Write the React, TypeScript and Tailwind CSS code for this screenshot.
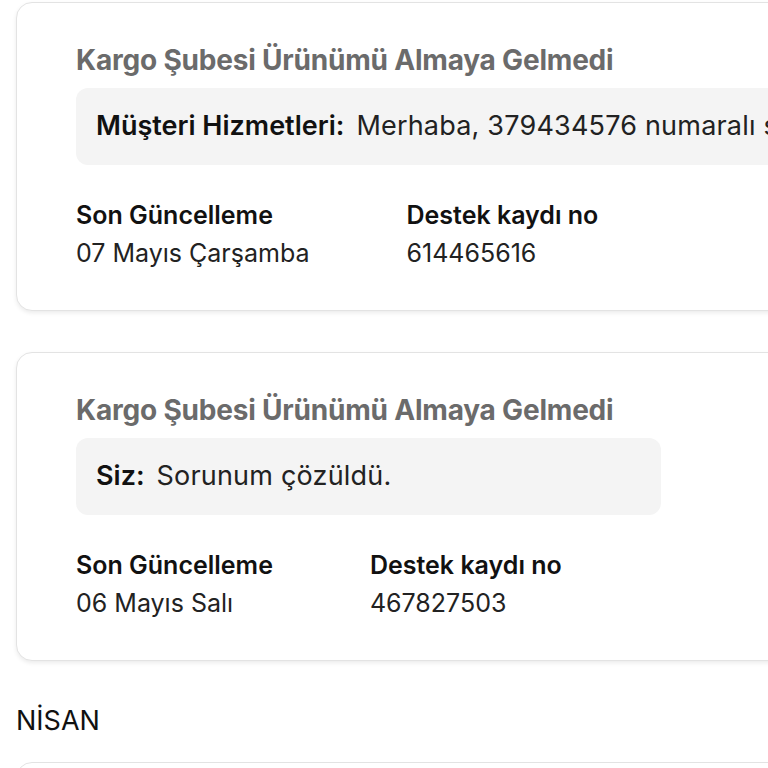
import React from 'react';

interface Ticket {
  title: string;
  sender: string;
  message: string;
  updated: string;
  ticketNo: string;
  boxClass: string;
}

const tickets: Ticket[] = [
  {
    title: 'Kargo Şubesi Ürünümü Almaya Gelmedi',
    sender: 'Müşteri Hizmetleri:',
    message: 'Merhaba, 379434576 numaralı siparişiniz için kargo şubesi ile iletişime geçtik.',
    updated: '07 Mayıs Çarşamba',
    ticketNo: '614465616',
    boxClass: 'w-[900px]',
  },
  {
    title: 'Kargo Şubesi Ürünümü Almaya Gelmedi',
    sender: 'Siz:',
    message: 'Sorunum çözüldü.',
    updated: '06 Mayıs Salı',
    ticketNo: '467827503',
    boxClass: 'w-[585px]',
  },
];

function TicketCard({ ticket }: { ticket: Ticket }) {
  return (
    <div className="w-[900px] rounded-[16px] border border-[#e3e3e3] bg-white pl-[59px] pt-[41px] pb-[38px] shadow-[0_2px_4px_rgba(0,0,0,0.08)]">
      <h3 className="text-[28px] leading-[32px] font-bold text-[#6b6b6b] tracking-[-0.2px]">
        {ticket.title}
      </h3>

      <div className={`mt-[12px] h-[77px] rounded-[12px] bg-[#f4f4f4] px-[20px] flex items-center whitespace-nowrap overflow-hidden ${ticket.boxClass}`}>
        <span className="text-[27px] font-semibold text-[#111]">{ticket.sender}</span>
        <span className="ml-[12px] text-[27px] tracking-[0.2px] text-[#222]">{ticket.message}</span>
      </div>

      <div className="mt-[31px] flex gap-[97px] text-[25px] leading-[38px]">
        <div>
          <div className="font-semibold text-[#111]">Son Güncelleme</div>
          <div className="text-[#222]">{ticket.updated}</div>
        </div>
        <div>
          <div className="font-semibold text-[#111]">Destek kaydı no</div>
          <div className="text-[#222]">{ticket.ticketNo}</div>
        </div>
      </div>
    </div>
  );
}

export default function App() {
  return (
    <div
      className="w-[768px] h-[768px] overflow-hidden bg-white"
      style={{ fontFamily: 'Inter, "Noto Sans", sans-serif' }}
    >
      <div className="pl-[16px] pt-[2px] flex flex-col gap-[41px]">
        {tickets.map((t) => (
          <TicketCard key={t.ticketNo} ticket={t} />
        ))}
      </div>

      <div className="pl-[16px] mt-[43px] text-[27px] leading-[34px] text-[#111]">NİSAN</div>

      <div className="ml-[16px] mt-[24px] w-[900px] h-[80px] rounded-[16px] border border-[#e3e3e3] bg-white" />
    </div>
  );
}
